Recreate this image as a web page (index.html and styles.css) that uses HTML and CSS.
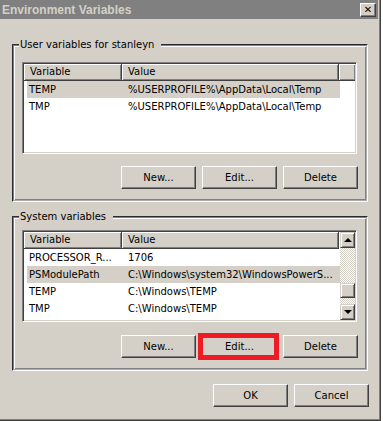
FILE: index.html
```html
<!DOCTYPE html>
<html>
<head>
  <meta charset="utf-8">
  <title>Environment Variables</title>
  <link rel="stylesheet" href="styles.css">
</head>
<body>

<div class="window">
  <div class="titlebar">
    <span class="title">Environment Variables</span>
    <span class="close">&#x2715;</span>
  </div>

  <div class="group user">
    <div class="group-head"><span>User variables for stanleyn</span></div>
    <div class="list">
      <div class="list-main">
        <div class="header">
          <div class="hcell col-var">Variable</div>
          <div class="hcell col-val">Value</div>
          <div class="hcell col-fill"></div>
        </div>
        <div class="row selected"><span class="c1">TEMP</span><span class="c2">%USERPROFILE%\AppData\Local\Temp</span></div>
        <div class="row"><span class="c1">TMP</span><span class="c2">%USERPROFILE%\AppData\Local\Temp</span></div>
      </div>
    </div>
    <div class="buttons">
      <div class="btn">New...</div>
      <div class="btn">Edit...</div>
      <div class="btn">Delete</div>
    </div>
  </div>

  <div class="group system">
    <div class="group-head"><span>System variables</span></div>
    <div class="list">
      <div class="list-main">
        <div class="header">
          <div class="hcell col-var">Variable</div>
          <div class="hcell col-val">Value</div>
        </div>
        <div class="row"><span class="c1">PROCESSOR_R...</span><span class="c2">1706</span></div>
        <div class="row selected"><span class="c1">PSModulePath</span><span class="c2">C:\Windows\system32\WindowsPowerS...</span></div>
        <div class="row"><span class="c1">TEMP</span><span class="c2">C:\Windows\TEMP</span></div>
        <div class="row"><span class="c1">TMP</span><span class="c2">C:\Windows\TEMP</span></div>
      </div>
      <div class="scrollbar">
        <div class="sbtn"><span class="arrow-up"></span></div>
        <div class="track"><div class="thumb"></div></div>
        <div class="sbtn"><span class="arrow-down"></span></div>
      </div>
    </div>
    <div class="buttons">
      <div class="btn">New...</div>
      <div class="btn highlight">Edit...</div>
      <div class="btn">Delete</div>
    </div>
  </div>

  <div class="footer">
    <div class="btn">OK</div>
    <div class="btn">Cancel</div>
  </div>
</div>

</body>
</html>
```

FILE: styles.css
```css
body {
  margin: 0;
  background: #ffffff;
  font-family: "DejaVu Sans", sans-serif;
  font-size: 10px;
  color: #000000;
}

.window {
  width: 381px;
  height: 421px;
  box-sizing: border-box;
  background: #d4d0c8;
  border-right: 1px solid #404040;
  border-bottom: 1px solid #404040;
  box-shadow: inset -1px -1px #808080;
}

.titlebar {
  height: 19px;
  margin-right: 2px;
  background: #808080;
  display: flex;
  align-items: center;
  justify-content: space-between;
  padding: 0 2px 0 2px;
}
.title {
  color: #d4d0c8;
  font-family: "Liberation Sans", sans-serif;
  font-weight: bold;
  font-size: 12px;
}
.close {
  width: 16px;
  height: 14px;
  box-sizing: border-box;
  background: #d4d0c8;
  border: 1px solid;
  border-color: #ffffff #404040 #404040 #ffffff;
  box-shadow: inset -1px -1px #808080;
  font-size: 10px;
  font-weight: bold;
  line-height: 12px;
  text-align: center;
}

/* group boxes */
.group {
  width: 356px;
  box-sizing: border-box;
  margin-left: 12px;
  border: 2px groove #d4d0c8;
  border-color: #808080 #ffffff #ffffff #808080;
  box-shadow: inset 1px 1px #ffffff, inset -1px -1px #808080;
  padding: 0 8px 11px 8px;
}
.group.user { margin-top: 25px; }
.group.system { margin-top: 14px; }

.group-head {
  margin-top: -8px;
  height: 24px;
}
.system .group-head { height: 20px; }
.group-head span {
  display: inline-block;
  background: #d4d0c8;
  line-height: 14px;
  margin-left: -3px;
  padding: 0 7px 0 1px;
}

/* list views */
.list {
  width: 335px;
  height: 92px;
  box-sizing: border-box;
  background: #ffffff;
  border: 1px solid;
  border-color: #808080 #ffffff #ffffff #808080;
  box-shadow: inset 1px 1px #404040, inset -1px -1px #d4d0c8;
  padding: 1px;
  display: flex;
}
.list-main { flex: 1; }

.header {
  display: flex;
  height: 17px;
}
.hcell {
  box-sizing: border-box;
  background: #d4d0c8;
  border-right: 1px solid #404040;
  border-bottom: 1px solid #404040;
  box-shadow: inset 1px 1px #ffffff, inset -1px -1px #808080;
  padding-left: 6px;
  line-height: 16px;
}
.col-var { width: 98px; }
.col-val { width: 217px; }
.col-fill { flex: 1; border-right: 0; }

.row {
  display: grid;
  grid-template-columns: 95px 218px;
  width: 313px;
  height: 17px;
  margin-left: 3px;
  line-height: 17px;
  white-space: nowrap;
}
.row.selected { background: #d4d0c8; }
.c1 { padding-left: 2px; overflow: hidden; }
.c2 { padding-left: 6px; overflow: hidden; }

/* scrollbar */
.scrollbar {
  width: 16px;
  display: flex;
  flex-direction: column;
}
.sbtn, .thumb {
  box-sizing: border-box;
  background: #d4d0c8;
  border: 1px solid;
  border-color: #d4d0c8 #404040 #404040 #d4d0c8;
  box-shadow: inset 1px 1px #ffffff, inset -1px -1px #808080;
}
.sbtn {
  height: 16px;
  display: flex;
  align-items: center;
  justify-content: center;
}
.arrow-up, .arrow-down {
  width: 0;
  height: 0;
  border-left: 4px solid transparent;
  border-right: 4px solid transparent;
}
.arrow-up { border-bottom: 4px solid #000000; }
.arrow-down { border-top: 4px solid #000000; }
.track {
  flex: 1;
  background: repeating-conic-gradient(#ffffff 0 25%, #d4d0c8 0 50%) 0 0 / 2px 2px;
}
.thumb {
  height: 15px;
  margin-top: 35px;
}

/* buttons */
.buttons, .footer {
  display: flex;
  justify-content: flex-end;
  gap: 6px;
}
.buttons { margin-top: 12px; }
.system .buttons { margin-top: 13px; }
.footer {
  margin-top: 13px;
  padding-right: 11px;
}
.btn {
  width: 75px;
  height: 23px;
  box-sizing: border-box;
  border: 1px solid;
  border-color: #ffffff #404040 #404040 #ffffff;
  box-shadow: inset -1px -1px #808080;
  text-align: center;
  line-height: 21px;
}
.highlight { position: relative; }
.highlight::after {
  content: "";
  position: absolute;
  left: -5px;
  top: -3px;
  width: 81px;
  height: 27px;
  box-sizing: border-box;
  border: 5px solid #ed1c24;
}
```
